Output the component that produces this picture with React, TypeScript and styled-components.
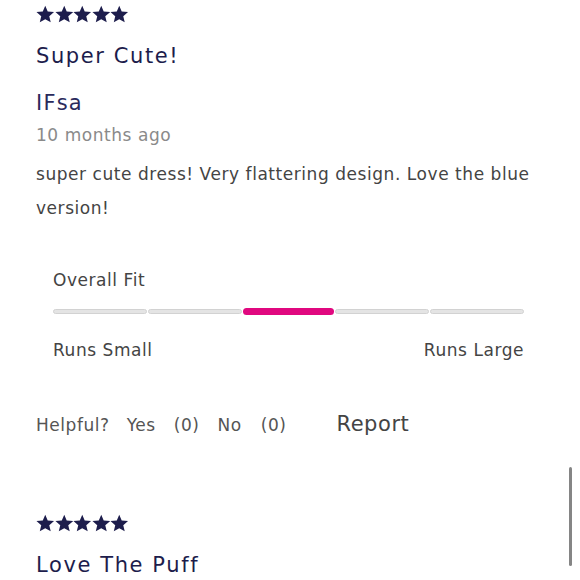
import React from "react";
import styled, { createGlobalStyle } from "styled-components";

const Global = createGlobalStyle`
  html, body {
    margin: 0;
    padding: 0;
    background: #fff;
    overflow: hidden;
  }
  body {
    font-family: "DejaVu Sans", "Liberation Sans", sans-serif;
    letter-spacing: 0.55px;
  }
`;

const Page = styled.div`
  position: relative;
  width: 580px;
  height: 580px;
  overflow: hidden;
`;

const List = styled.div`
  display: flex;
  flex-direction: column;
  padding: 4px 0 0 36px;
  width: 500px;
`;

const Review = styled.section`
  display: flex;
  flex-direction: column;
`;

const Stars = styled.div`
  display: flex;
  height: 21px;
  align-items: center;
`;

const Title = styled.h3`
  margin: 16px 0 0;
  font-size: 21px;
  font-weight: 400;
  letter-spacing: 1.6px;
  color: #1d1d4c;
  line-height: 30px;
`;

const Author = styled.div`
  margin-top: 17px;
  font-size: 21px;
  letter-spacing: 1.2px;
  color: #2a2a5c;
  line-height: 30px;
`;

const Date = styled.div`
  margin-top: 4px;
  font-size: 17px;
  color: #8a8a8a;
  line-height: 26px;
`;

const Body = styled.p`
  margin: 9px 0 0;
  font-size: 17px;
  color: #444;
  line-height: 34px;
`;

const Fit = styled.div`
  display: flex;
  flex-direction: column;
  margin: 43px 0 0 17px;
  width: 471px;
`;

const FitLabel = styled.div`
  font-size: 17px;
  color: #444;
  line-height: 24px;
`;

const Track = styled.div`
  display: flex;
  align-items: center;
  gap: 1px;
  margin-top: 15px;
  height: 8px;
`;

const Segment = styled.div<{ $active?: boolean }>`
  flex: 1;
  height: ${({ $active }) => ($active ? "7px" : "5px")};
  border-radius: 4px;
  box-sizing: border-box;
  background: ${({ $active }) => ($active ? "#e0087f" : "#e4e4e4")};
  border: ${({ $active }) => ($active ? "none" : "1px solid #d2d2d2")};
`;

const Ends = styled.div`
  display: flex;
  justify-content: space-between;
  margin-top: 23px;
  font-size: 17px;
  color: #444;
  line-height: 24px;
`;

const Actions = styled.div`
  display: flex;
  align-items: baseline;
  margin-top: 49px;
  font-size: 17px;
  color: #555;
  line-height: 26px;
`;

const Action = styled.span<{ $gap: number }>`
  margin-right: ${({ $gap }) => $gap}px;
`;

const Report = styled.span`
  font-size: 21px;
  color: #444;
`;

const Spacer = styled.div`
  height: 75px;
`;

const Scrollbar = styled.div`
  position: absolute;
  right: 8px;
  top: 467px;
  width: 3px;
  height: 99px;
  border-radius: 2px;
  background: #858585;
`;

const StarIcon = () => (
  <svg width="18.5" height="19" viewBox="0 0 24 23">
    <path
      d="M12 0.3l3.2 7.4 8.2 0.7-6.2 5.3 1.9 8L12 17.5l-7.1 4.2 1.9-8L0.6 8.4l8.2-0.7z"
      fill="#1d1d4c"
    />
  </svg>
);

const StarRow = () => (
  <Stars>
    {[0, 1, 2, 3, 4].map((i) => (
      <StarIcon key={i} />
    ))}
  </Stars>
);

const App = () => (
  <Page>
    <Global />
    <List>
      <Review>
        <StarRow />
        <Title>Super Cute!</Title>
        <Author>IFsa</Author>
        <Date>10 months ago</Date>
        <Body>
          super cute dress! Very flattering design. Love the blue version!
        </Body>
        <Fit>
          <FitLabel>Overall Fit</FitLabel>
          <Track>
            <Segment />
            <Segment />
            <Segment $active />
            <Segment />
            <Segment />
          </Track>
          <Ends>
            <span>Runs Small</span>
            <span>Runs Large</span>
          </Ends>
        </Fit>
        <Actions>
          <Action $gap={17}>Helpful?</Action>
          <Action $gap={18}>Yes</Action>
          <Action $gap={18}>(0)</Action>
          <Action $gap={19}>No</Action>
          <Action $gap={50}>(0)</Action>
          <Report>Report</Report>
        </Actions>
      </Review>
      <Spacer />
      <Review>
        <StarRow />
        <Title>Love The Puff</Title>
      </Review>
    </List>
    <Scrollbar />
  </Page>
);

export default App;
